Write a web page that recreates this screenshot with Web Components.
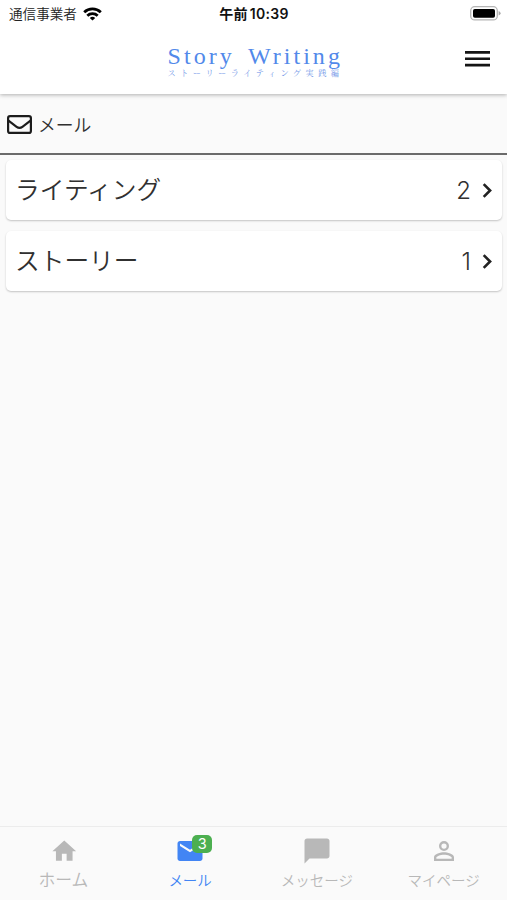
<!DOCTYPE html>
<html lang="ja">
<head>
<meta charset="utf-8">
<title>Story Writing</title>
<style>
  body {
    margin: 0;
    background: #fafafa;
    color: #303030;
    font-family: Inter, "Noto Sans CJK JP", sans-serif;
    font-weight: 350;
  }
</style>
</head>
<body>
<mail-app></mail-app>

<script>
/**
 * Barra de estado del teléfono
 */
class StatusBar extends HTMLElement {
  constructor() {
    super();
    this.attachShadow({ mode: 'open' });
  }

  connectedCallback() {
    this.shadowRoot.innerHTML = `
      <style>
        :host {
          display: grid;
          grid-template-columns: 1fr auto 1fr;
          align-items: center;
          height: 27px;
          padding: 0 6px 0 9px;
          background: #fff;
          color: #111;
          font-size: 13.6px;
          line-height: 26px;
          white-space: nowrap;
        }
        svg { display: block; }
        .carrier { display: flex; align-items: center; gap: 6px; color: #222; }
        .carrier span { padding-top: 1px; }
        .time { padding-right: 2px; font-weight: 600; font-size: 14px; letter-spacing: 0.3px; word-spacing: -2px; }
        .battery { justify-self: end; margin-bottom: 1px; }
      </style>
      <div class="carrier">
        <span>${this.getAttribute('carrier')}</span>
        <svg width="19" height="14" viewBox="0 0 19 14" fill="none" stroke="#000" stroke-width="2.8">
          <path d="M1.2 5.2a12 12 0 0 1 16.6 0"/>
          <path d="M4.3 8.7a7.5 7.5 0 0 1 10.4 0"/>
          <path d="M9.5 13.6L6.8 10.9a4 4 0 0 1 5.4 0z" fill="#000" stroke="none"/>
        </svg>
      </div>
      <div class="time">${this.getAttribute('time')}</div>
      <svg class="battery" width="31" height="15" viewBox="0 0 31 15">
        <rect x=".7" y=".7" width="26.6" height="13.2" rx="4" fill="#fff" stroke="#b5b5b5" stroke-width="1.3"/>
        <rect x="3" y="3" width="22" height="8.7" rx="1.8" fill="#000"/>
        <path d="M28.6 5v4.6q2-.8 2-2.3t-2-2.3z" fill="#aaa"/>
      </svg>
    `;
  }
}

/**
 * Cabecera con el logotipo y el botón de menú
 */
class AppHeader extends HTMLElement {
  constructor() {
    super();
    this.attachShadow({ mode: 'open' });
  }

  connectedCallback() {
    this.shadowRoot.innerHTML = `
      <style>
        :host {
          display: grid;
          grid-template-columns: 1fr auto 1fr;
          align-items: center;
          box-sizing: border-box;
          height: 67px;
          padding: 0 15px 3px 19px;
          background: #fff;
        }
        .logo {
          grid-column: 2;
          padding-top: 3px;
          color: #5289ea;
          font-family: "Liberation Serif", "Noto Serif CJK JP", "Noto Sans CJK JP", serif;
          font-weight: 400;
          white-space: nowrap;
        }
        .name { font-size: 24px; line-height: 26px; letter-spacing: 3.05px; word-spacing: 4.5px; }
        .sub {
          font-size: 8.2px;
          line-height: 10px;
          letter-spacing: 4.45px;
          color: #7196e8;
        }
        .name ::slotted(span), .sub ::slotted(span) { display: block; line-height: inherit; }
        button {
          justify-self: end;
          display: block;
          margin-right: 2px;
          padding: 0;
          border: 0;
          background: none;
        }
        svg { display: block; }
      </style>
      <div class="logo">
        <div class="name"><slot name="name"></slot></div>
        <div class="sub"><slot name="sub"></slot></div>
      </div>
      <button aria-label="menu">
        <svg width="25" height="16" viewBox="0 0 25 16" fill="#151515">
          <path d="M0 0h25v2.7H0zM0 6.4h25v2.7H0zM0 12.8h25v2.7H0z"/>
        </svg>
      </button>
    `;
  }
}

/**
 * Título de la página con el icono de sobre
 */
class PageTitle extends HTMLElement {
  constructor() {
    super();
    this.attachShadow({ mode: 'open' });
  }

  connectedCallback() {
    this.shadowRoot.innerHTML = `
      <style>
        :host {
          display: flex;
          align-items: center;
          gap: 6px;
          box-sizing: border-box;
          height: 61px;
          padding-left: 7px;
          border-bottom: 2px solid #6b6b6b;
          font-size: 17.8px;
        }
        svg { display: block; margin-top: 1px; }
      </style>
      <svg width="25" height="19" viewBox="0 0 25 19" fill="none" stroke="#1c1c1c" stroke-width="2.2">
        <rect x="1.1" y="1.1" width="22.8" height="16.8" rx="2"/>
        <path d="M1.5 5.7L9.6 11.8q2.9 2.1 5.8 0L23.5 5.7"/>
      </svg>
      <slot></slot>
    `;
  }
}

/**
 * Fila de categoría con contador
 */
class MailRow extends HTMLElement {
  constructor() {
    super();
    this.attachShadow({ mode: 'open' });
  }

  connectedCallback() {
    this.shadowRoot.innerHTML = `
      <style>
        :host {
          display: flex;
          align-items: center;
          box-sizing: border-box;
          height: 60px;
          padding: 0 9px;
          border-radius: 5px;
          background: #fff;
          box-shadow: 0 1px 2px rgba(0, 0, 0, 0.22);
          font-size: 24px;
          line-height: 60px;
        }
        .label { flex: 1; font-size: 24.7px; }
        .count { padding-top: 2px; }
        svg { display: block; margin-left: 11px; }
      </style>
      <span class="label"><slot></slot></span>
      <span class="count">${this.getAttribute('count')}</span>
      <svg width="11" height="15" viewBox="0 0 11 15" fill="none" stroke="#222" stroke-width="2.6">
        <path d="M1.7 1.1l6.4 6.4-6.4 6.4"/>
      </svg>
    `;
  }
}

const TAB_ICONS = {
  home: '<path d="M10 20v-6h4v6h5v-8h3L12 3 2 12h3v8z"/>',
  mail: '<path d="M20 4H4c-1.1 0-2 .9-2 2v12c0 1.1.9 2 2 2h16c1.1 0 2-.9 2-2V6c0-1.1-.9-2-2-2zm0 4l-8 5-8-5V6l8 5 8-5v2z"/>',
  message: '<path d="M20 2H4c-1.1 0-2 .9-2 2v18l4-4h14c1.1 0 2-.9 2-2V4c0-1.1-.9-2-2-2z"/>',
  person: '<path d="M12 5.9a2.1 2.1 0 1 1 0 4.2 2.1 2.1 0 0 1 0-4.2m0 9c2.97 0 6.1 1.46 6.1 2.1v1.1H5.9V17c0-.64 3.13-2.1 6.1-2.1M12 4a4 4 0 1 0 0 8 4 4 0 0 0 0-8zm0 9c-2.67 0-8 1.34-8 4v3h16v-3c0-2.66-5.33-4-8-4z"/>'
};

/**
 * Pestaña de la barra inferior
 */
class TabItem extends HTMLElement {
  constructor() {
    super();
    this.attachShadow({ mode: 'open' });
  }

  connectedCallback() {
    const icon = this.getAttribute('icon');
    const badge = this.getAttribute('badge');
    const size = icon === 'home' ? 28.5 : 30;

    this.shadowRoot.innerHTML = `
      <style>
        :host {
          display: flex;
          flex-direction: column;
          align-items: center;
          color: #b8b8b8;
          font-size: 14.5px;
          white-space: nowrap;
        }
        :host([active]) { color: #4285f4; }
        :host([icon="home"]) { font-size: 16.8px; }
        .icon {
          position: relative;
          display: grid;
          place-items: center;
          width: 30px;
          height: 30px;
          margin-top: 9px;
        }
        :host([icon="home"]) .icon { padding-left: 1px; }
        svg { display: block; fill: currentColor; }
        .badge {
          position: absolute;
          top: -1px;
          left: 17px;
          width: 20px;
          height: 18px;
          border-radius: 5px;
          background: #4caf50;
          color: #fff;
          font-size: 14.5px;
          font-weight: 400;
          line-height: 18px;
          text-align: center;
        }
        .label { line-height: 20px; margin-top: 5px; }
        :host([icon="home"]) .label { margin-top: 4px; }
      </style>
      <div class="icon">
        <svg width="${size}" height="${size}" viewBox="0 0 24 24">${TAB_ICONS[icon]}</svg>
        ${badge ? `<span class="badge">${badge}</span>` : ''}
      </div>
      <span class="label"><slot></slot></span>
    `;
  }
}

/**
 * Barra de navegación inferior
 */
class TabBar extends HTMLElement {
  constructor() {
    super();
    this.attachShadow({ mode: 'open' });
  }

  connectedCallback() {
    this.shadowRoot.innerHTML = `
      <style>
        :host {
          display: grid;
          grid-template-columns: repeat(4, 1fr);
          box-sizing: border-box;
          height: 74px;
          border-top: 1px solid #ececec;
          background: #fafafa;
        }
      </style>
      <slot></slot>
    `;
  }
}

/**
 * Pantalla principal de correo
 */
class MailApp extends HTMLElement {
  constructor() {
    super();
    this.attachShadow({ mode: 'open' });
  }

  connectedCallback() {
    this.shadowRoot.innerHTML = `
      <style>
        :host {
          display: flex;
          flex-direction: column;
          height: 100vh;
          overflow: hidden;
        }
        .top {
          z-index: 1;
          box-shadow: 0 1px 4px rgba(0, 0, 0, 0.3);
        }
        main {
          flex: 1;
          display: flex;
          flex-direction: column;
          gap: 11px;
          padding: 5px 5px 0 6px;
        }
      </style>
      <div class="top">
        <status-bar carrier="通信事業者" time="午前 10:39"></status-bar>
        <app-header>
          <span slot="name">Story Writing</span>
          <span slot="sub">ストーリーライティング実践編</span>
        </app-header>
      </div>
      <page-title>メール</page-title>
      <main>
        <mail-row count="2">ライティング</mail-row>
        <mail-row count="1">ストーリー</mail-row>
      </main>
      <tab-bar>
        <tab-item icon="home">ホーム</tab-item>
        <tab-item icon="mail" badge="3" active>メール</tab-item>
        <tab-item icon="message">メッセージ</tab-item>
        <tab-item icon="person">マイページ</tab-item>
      </tab-bar>
    `;
  }
}

customElements.define('status-bar', StatusBar);
customElements.define('app-header', AppHeader);
customElements.define('page-title', PageTitle);
customElements.define('mail-row', MailRow);
customElements.define('tab-item', TabItem);
customElements.define('tab-bar', TabBar);
customElements.define('mail-app', MailApp);
</script>
</body>
</html>
